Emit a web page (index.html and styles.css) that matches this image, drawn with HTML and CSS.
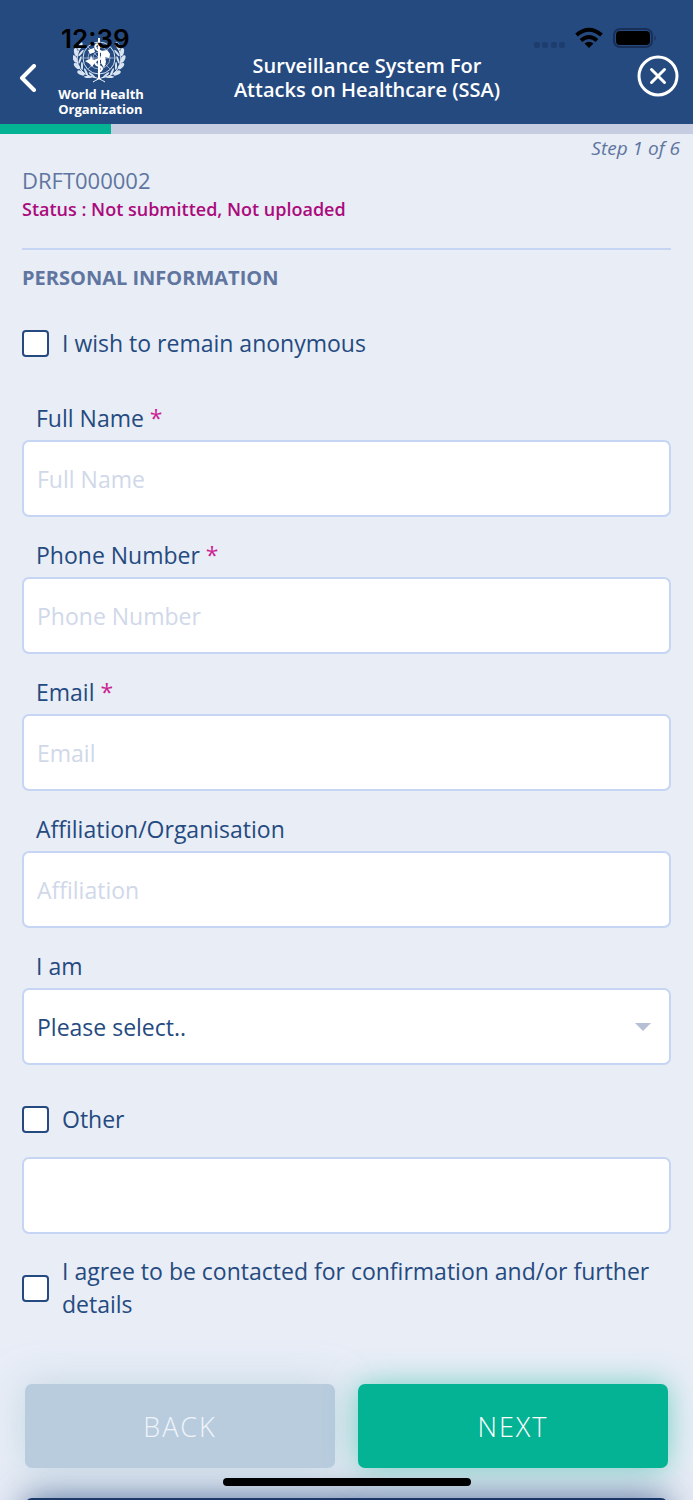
FILE: index.html
```html
<!DOCTYPE html>
<html lang="en">
<head>
    <meta charset="UTF-8">
    <meta name="viewport" content="width=device-width, initial-scale=1.0">
    <title>Surveillance System For Attacks on Healthcare (SSA)</title>
    <link rel="stylesheet" href="styles.css">
</head>
<body>
    <div class="screen">
        <div class="status-bar">
            <span class="time">12:39</span>
            <svg class="status-icons" width="124" height="24" viewBox="0 0 124 24">
                <g fill="#1d3d6e">
                    <rect x="1" y="16" width="6" height="6" rx="2"/>
                    <rect x="9" y="16" width="6" height="6" rx="2"/>
                    <rect x="18" y="16" width="6" height="6" rx="2"/>
                    <rect x="26" y="16" width="6" height="6" rx="2"/>
                </g>
                <g fill="none" stroke="#000" stroke-width="4">
                    <path d="M43.500 9 Q56 -1.500 68.500 9"/>
                    <path d="M48 14.500 Q56 7.500 64 14.500"/>
                </g>
                <path d="M51.500 17.500 Q56 14 60.500 17.500 L56 22 Z"/>
                <rect x="81" y="3" width="38" height="18" rx="6" fill="none" stroke="#182f58" stroke-width="2"/>
                <rect x="83" y="5" width="34" height="14" rx="4"/>
                <path d="M121.500 9 Q124 12 121.500 15 Z" fill="#182f58"/>
            </svg>
        </div>

        <header class="header">
            <button type="button" class="back-arrow" aria-label="Previous screen">
                <svg width="18" height="28" viewBox="0 0 18 28">
                    <path d="M15 2 L3 14 L15 26" fill="none" stroke="#fff" stroke-width="4" stroke-linecap="round" stroke-linejoin="round"/>
                </svg>
            </button>
            <div class="logo">
                <svg width="56" height="46" viewBox="0 0 56 46" fill="none" stroke="#d9e4f2">
                    <circle cx="26" cy="21" r="16" stroke-width="1"/>
                    <circle cx="26" cy="21" r="11" stroke-width="1" opacity="0.6"/>
                    <circle cx="26" cy="21" r="6" stroke-width="1" opacity="0.6"/>
                    <path d="M10 21 H42 M15 10 L37 32 M37 10 L15 32" stroke-width="1" opacity="0.6"/>
                    <path d="M12 24 L17 22 L18 18 L20 23 L24 22 L21 27 L19 30 L17 27 Z M28 14 L34 13 L37 17 L36 21 L32 20 L33 25 L31 31 L28 26 Z M15 13 L21 11 L22 15 L17 17 Z" fill="#fff" stroke="none"/>
                    <path d="M26 1 V42" stroke="#fff" stroke-width="2"/>
                    <path d="M28 7 C20 6 21 12 27 14 C33 17 31 21 26 22 C20 24 22 28 26 29 C31 31 29 34 25 35" stroke="#fff" stroke-width="2"/>
                    <g id="branch">
                        <path d="M9 8 C-1 22 5 37 20 40 C25 41 29 43 32 45" stroke="#fff" stroke-width="1"/>
                        <g fill="#d9e4f2" stroke="none">
                            <ellipse cx="7" cy="9" rx="2" ry="4" transform="rotate(25 7 9)"/>
                            <ellipse cx="3" cy="15" rx="2" ry="4" transform="rotate(-10 3 15)"/>
                            <ellipse cx="8" cy="16" rx="1" ry="4" transform="rotate(40 8 16)"/>
                            <ellipse cx="2" cy="22" rx="2" ry="4" transform="rotate(-25 2 22)"/>
                            <ellipse cx="7" cy="23" rx="1" ry="4" transform="rotate(20 7 23)"/>
                            <ellipse cx="4" cy="29" rx="2" ry="4" transform="rotate(-45 4 29)"/>
                            <ellipse cx="9" cy="29" rx="1" ry="4" transform="rotate(-2 9 29)"/>
                            <ellipse cx="8" cy="36" rx="2" ry="4" transform="rotate(-65 8 36)"/>
                            <ellipse cx="13" cy="35" rx="1" ry="4" transform="rotate(-25 13 35)"/>
                            <ellipse cx="15" cy="40" rx="1" ry="4" transform="rotate(-85 15 40)"/>
                            <ellipse cx="19" cy="38" rx="1" ry="4" transform="rotate(-50 19 38)"/>
                        </g>
                    </g>
                    <use href="#branch" transform="matrix(-1 0 0 1 52 0)"/>
                </svg>
                <div class="logo-text">World Health<br>Organization</div>
            </div>
            <h1>Surveillance System For<br>Attacks on Healthcare (SSA)</h1>
            <button type="button" class="close" aria-label="Close">
                <svg width="42" height="42" viewBox="0 0 42 42" fill="none" stroke="#fff" stroke-width="3" stroke-linecap="round">
                    <circle cx="21" cy="21" r="19"/>
                    <path d="M14.500 14.500 L27.500 27.500 M27.500 14.500 L14.500 27.500"/>
                </svg>
            </button>
        </header>

        <div class="progress">
            <div class="progress-bar" style="width: 16%"></div>
        </div>
        <div class="step">Step 1 of 6</div>

        <form onsubmit="return false;">
            <div class="report">
                <div class="report-id">DRFT000002</div>
                <div class="report-status">Status : Not submitted, Not uploaded</div>
            </div>

            <h2>PERSONAL INFORMATION</h2>

            <label class="check anonymous">
                <input type="checkbox" name="anonymous">
                <span>I wish to remain anonymous</span>
            </label>

            <div class="form-group">
                <label for="name">Full Name <span class="required">*</span></label>
                <input type="text" id="name" class="field" placeholder="Full Name">
            </div>

            <div class="form-group">
                <label for="phone">Phone Number <span class="required">*</span></label>
                <input type="tel" id="phone" class="field" placeholder="Phone Number">
            </div>

            <div class="form-group">
                <label for="email">Email <span class="required">*</span></label>
                <input type="email" id="email" class="field" placeholder="Email">
            </div>

            <div class="form-group">
                <label for="affiliation">Affiliation/Organisation</label>
                <input type="text" id="affiliation" class="field" placeholder="Affiliation">
            </div>

            <div class="form-group">
                <label for="role">I am</label>
                <div class="select-box">
                    <select id="role" class="field">
                        <option>Please select..</option>
                    </select>
                    <svg class="caret" width="16" height="8" viewBox="0 0 16 8"><path d="M0 0 H16 L8 8 Z" fill="#b5c0d6"/></svg>
                </div>
            </div>

            <label class="check other">
                <input type="checkbox" name="other">
                <span>Other</span>
            </label>
            <input type="text" class="field" aria-label="Other">

            <label class="check agree">
                <input type="checkbox" name="agree">
                <span>I agree to be contacted for confirmation and/or further details</span>
            </label>

            <div class="buttons">
                <button type="button" class="btn btn-back">BACK</button>
                <button type="button" class="btn btn-next">NEXT</button>
            </div>
        </form>

        <div class="bottom-panel"></div>
        <div class="home-indicator"></div>
    </div>
</body>
</html>
```

FILE: styles.css
```css
* {
    box-sizing: border-box;
}

body {
    margin: 0;
    font-family: "Open Sans", "Noto Sans", sans-serif;
    font-size: 23px;
    color: #254a80;
    background-color: #e8edf6;
}

button {
    border: none;
    padding: 0;
    background: none;
    font-family: inherit;
    cursor: pointer;
}

svg {
    display: block;
}

.screen {
    position: relative;
    min-height: 100vh;
    overflow: hidden;
}

/* phone status bar, lies over the header */
.status-bar {
    position: absolute;
    top: 22px;
    left: 61px;
    right: 36px;
    display: flex;
    justify-content: space-between;
    align-items: center;
    height: 32px;
    pointer-events: none;
}

.time {
    font-family: Inter, sans-serif;
    font-size: 26px;
    font-weight: 600;
    color: #000;
}

.header {
    display: flex;
    align-items: flex-end;
    height: 124px;
    padding: 0 14px 7px 19px;
    background-color: #254a80;
    color: #fff;
}

.back-arrow {
    margin-bottom: 25px;
}

.logo {
    display: flex;
    flex-direction: column;
    align-items: center;
    gap: 4px;
    width: 88px;
    margin-left: 20px;
}

.logo-text {
    font-size: 13px;
    line-height: 15px;
    font-weight: 700;
    white-space: nowrap;
}

h1 {
    flex: 1;
    margin: 0 0 15px;
    padding-right: 48px;
    font-size: 20px;
    line-height: 24px;
    font-weight: 600;
    text-align: center;
}

.close {
    margin-bottom: 20px;
}

.progress {
    height: 10px;
    background-color: #c7cde0;
}

.progress-bar {
    height: 100%;
    background-color: #04b394;
}

.step {
    padding: 0 13px;
    font-size: 19px;
    line-height: 28px;
    font-style: italic;
    text-align: right;
    color: #60759f;
}

form {
    padding: 3px 22px 0;
}

.report {
    padding-bottom: 25px;
    border-bottom: 2px solid #c5d5f3;
}

.report-id {
    font-size: 22px;
    line-height: 30px;
    color: #60759f;
}

.report-status {
    font-size: 18px;
    line-height: 28px;
    font-weight: 600;
    color: #ab0b7c;
}

h2 {
    margin: 12px 0 0;
    font-size: 20px;
    line-height: 32px;
    font-weight: 700;
    color: #60759f;
}

.check {
    display: flex;
    align-items: center;
    gap: 13px;
    line-height: 33px;
}

.check input {
    appearance: none;
    flex: none;
    width: 27px;
    height: 27px;
    margin: 0;
    border: 2px solid #254a80;
    border-radius: 4px;
    background-color: #fff;
}

.check input:checked {
    background-color: #04b394;
}

.anonymous {
    margin: 33px 0 41px;
}

.form-group {
    margin-bottom: 21px;
}

.form-group label {
    display: block;
    padding: 0 14px 5px;
    line-height: 34px;
}

.required {
    color: #cc1f92;
}

.field {
    display: block;
    width: 100%;
    height: 77px;
    padding: 0 13px;
    border: 2px solid #c5d5f3;
    border-radius: 7px;
    background-color: #fff;
    font-family: inherit;
    font-size: 23px;
    color: #254a80;
}

.field::placeholder {
    color: #d0d8e9;
    opacity: 1;
}

.select-box {
    position: relative;
}

select.field {
    appearance: none;
}

.caret {
    position: absolute;
    top: 35px;
    right: 20px;
    pointer-events: none;
}

.other {
    margin: 38px 0 21px;
}

.agree {
    margin-top: 21px;
}

.buttons {
    display: flex;
    gap: 23px;
    margin-top: 63px;
    padding: 0 3px;
}

.btn {
    flex: 1;
    height: 84px;
    border-radius: 7px;
    font-size: 27px;
    font-weight: 300;
    letter-spacing: 2px;
    color: #fff;
}

.btn-back {
    background-color: #b8ccde;
    color: #f0f4fa;
    box-shadow: 0 0 36px rgba(170, 200, 215, 0.6);
}

.btn-next {
    background-color: #04b394;
    box-shadow: 0 0 30px rgba(4, 179, 148, 0.5);
}

/* only its top edge shows at the end of the page */
.bottom-panel {
    height: 40px;
    margin: 30px 25px -38px;
    border-radius: 7px 7px 0 0;
    background-color: #1b3768;
    box-shadow: 0 0 36px rgba(37, 74, 128, 0.8);
}

.home-indicator {
    position: absolute;
    left: 50%;
    bottom: 14px;
    width: 248px;
    height: 8px;
    margin-left: -124px;
    border-radius: 4px;
    background-color: #000;
}
```
